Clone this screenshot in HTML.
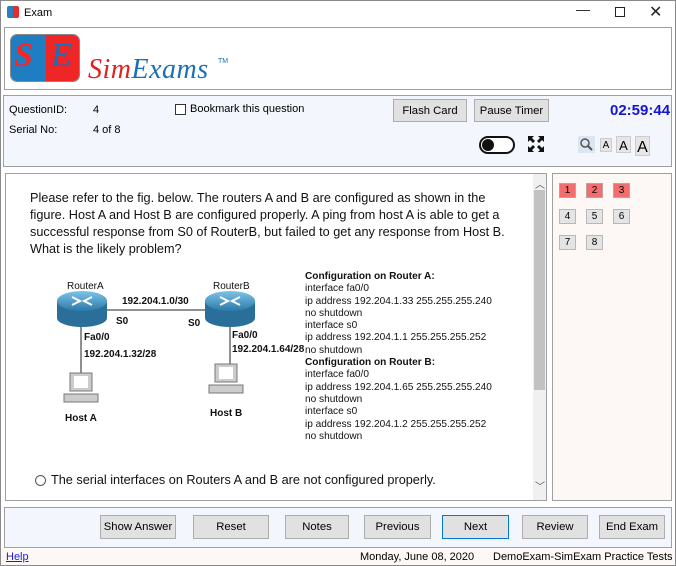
<!DOCTYPE html>
<html><head><meta charset="utf-8"><style>
*{margin:0;padding:0;box-sizing:border-box}
body{width:676px;height:566px;background:#fff;font-family:"Liberation Sans",Arial,sans-serif;position:relative;overflow:hidden;font-size:11px;color:#000}
.a{position:absolute}
.btn{position:absolute;background:#e1e1e1;border:1px solid #adadad;font-size:11.3px;text-align:center;line-height:22px;color:#000}
.cfg{position:absolute;left:305px;font-size:10.1px;line-height:12.3px;white-space:pre;color:#111}
.nb{position:absolute;width:17px;height:15px;background:#e4e4e4;border:1px solid #b8b8b8;font-size:10px;text-align:center;line-height:13px}
.nb.r{background:#f26d6d;border-color:#c0a0a0}
</style></head><body>
<div class="a" style="left:0;top:0;width:676px;height:566px;border:1px solid #8a8a8a"></div>
<div class="a" style="left:7px;top:6px;width:12px;height:12px;background:linear-gradient(90deg,#2a7fc0 50%,#e82b2b 50%);border-radius:2px"></div>
<div class="a" style="left:24px;top:7px;font-size:11px">Exam</div>
<div class="a" style="left:576px;top:1px;font-size:14px;color:#222">—</div>
<div class="a" style="left:615px;top:7px;width:10px;height:10px;border:1px solid #222"></div>
<div class="a" style="left:649px;top:2px;font-size:16px;color:#222">✕</div>
<div class="a" style="left:4px;top:27px;width:668px;height:63px;border:1px solid #a0a0a0;background:#fff"></div>
<div class="a" style="left:10px;top:34px;width:70px;height:48px;border-radius:7px;overflow:hidden;border:1px solid #888">
 <div class="a" style="left:0;top:0;width:35px;height:48px;background:#1f7dc2"></div>
 <div class="a" style="left:35px;top:0;width:35px;height:48px;background:#ee2626"></div>
 <div class="a" style="left:3px;top:2px;font:bold italic 34px 'Liberation Serif',serif;color:#f22">S</div>
 <div class="a" style="left:40px;top:2px;font:italic 34px 'Liberation Serif',serif;color:#1a6fb5">E</div>
</div>
<div class="a" style="left:88px;top:54px;font:italic 28px 'Liberation Serif',serif;color:#e32020;letter-spacing:0.5px">Sim<span style="color:#1a6fb5">Exams</span></div>
<div class="a" style="left:218px;top:58px;font-size:7px;color:#1a6fb5">TM</div>
<div class="a" style="left:3px;top:95px;width:669px;height:72px;border:1px solid #a0a0a0;background:#f4f6fd"></div>
<div class="a" style="left:9px;top:104px">QuestionID:</div>
<div class="a" style="left:93px;top:104px">4</div>
<div class="a" style="left:9px;top:124px">Serial No:</div>
<div class="a" style="left:93px;top:124px">4 of 8</div>
<div class="a" style="left:175px;top:104px;width:11px;height:11px;border:1px solid #333;background:#fff"></div>
<div class="a" style="left:190px;top:103px">Bookmark this question</div>
<div class="btn" style="left:393px;top:99px;width:74px;height:23px">Flash Card</div>
<div class="btn" style="left:474px;top:99px;width:75px;height:23px">Pause Timer</div>
<div class="a" style="left:610px;top:102px;font-size:15px;font-weight:bold;color:#1515d0">02:59:44</div>
<div class="a" style="left:479px;top:136px;width:36px;height:18px;border:2px solid #111;border-radius:9px;background:#fff"></div>
<div class="a" style="left:482px;top:139px;width:12px;height:12px;border-radius:6px;background:#111"></div>
<svg class="a" style="left:527px;top:135px" width="18" height="18" viewBox="0 0 18 18"><g fill="#111"><path d="M1 1h6l-2 2 3 3-2 2-3-3-2 2z"/><path d="M17 1v6l-2-2-3 3-2-2 3-3-2-2z"/><path d="M1 17v-6l2 2 3-3 2 2-3 3 2 2z"/><path d="M17 17h-6l2-2-3-3 2-2 3 3 2-2z"/></g></svg>
<div class="a" style="left:578px;top:136px;width:17px;height:17px;background:#dce6f0"></div>
<svg class="a" style="left:579px;top:137px" width="15" height="15"><circle cx="6" cy="6" r="4" fill="none" stroke="#555" stroke-width="1.5"/><line x1="9" y1="9" x2="13" y2="13" stroke="#555" stroke-width="2"/></svg>
<div class="a" style="left:600px;top:138px;width:12px;height:14px;background:#e6e6e6;border:1px solid #ccc;font-size:10px;text-align:center;line-height:13px">A</div>
<div class="a" style="left:616px;top:136px;width:15px;height:17px;background:#e6e6e6;border:1px solid #ccc;font-size:13px;text-align:center;line-height:17px">A</div>
<div class="a" style="left:635px;top:136px;width:15px;height:20px;background:#e6e6e6;border:1px solid #ccc;font-size:16px;text-align:center;line-height:21px">A</div>
<div class="a" style="left:5px;top:173px;width:542px;height:328px;border:1px solid #a0a0a0;background:#fff"></div>
<div class="a" style="left:533px;top:174px;width:13px;height:326px;background:#f0f0f0"></div>
<div class="a" style="left:534px;top:190px;width:11px;height:200px;background:#c2c2c2"></div>
<div class="a" style="left:535px;top:176px;font-size:10px;color:#555">︿</div>
<div class="a" style="left:535px;top:478px;font-size:10px;color:#555">﹀</div>
<div class="a" style="left:30px;top:190px;width:480px;font-size:12.7px;line-height:17px;color:#111">Please refer to the fig. below. The routers A and B are configured as shown in the figure. Host A and Host B are configured properly. A ping from host A is able to get a successful response from S0 of RouterB, but failed to get any response from Host B. What is the likely problem?</div>
<svg class="a" style="left:40px;top:270px" width="265" height="160" viewBox="0 0 265 160">
<defs><linearGradient id="g" x1="0" y1="0" x2="0" y2="1"><stop offset="0" stop-color="#7dc3e8"/><stop offset="1" stop-color="#2b7aa8"/></linearGradient></defs>
<line x1="45" y1="40" x2="185" y2="40" stroke="#222"/>
<line x1="41" y1="55" x2="41" y2="105" stroke="#222"/>
<line x1="190" y1="55" x2="190" y2="95" stroke="#222"/>
<g><rect x="17" y="31" width="50" height="17" fill="#2a6f99"/><ellipse cx="42" cy="48" rx="25" ry="9" fill="#2a6f99"/><ellipse cx="42" cy="31" rx="25" ry="10" fill="url(#g)"/><path d="M32 27l8 4-8 4M52 27l-8 4 8 4" stroke="#fff" stroke-width="2" fill="none"/></g>
<g transform="translate(148,0)"><rect x="17" y="31" width="50" height="17" fill="#2a6f99"/><ellipse cx="42" cy="48" rx="25" ry="9" fill="#2a6f99"/><ellipse cx="42" cy="31" rx="25" ry="10" fill="url(#g)"/><path d="M32 27l8 4-8 4M52 27l-8 4 8 4" stroke="#fff" stroke-width="2" fill="none"/></g>
<g font-family="Liberation Sans,Arial" font-size="10" fill="#111">
<text x="27" y="19">RouterA</text><text x="173" y="19">RouterB</text>
<text x="82" y="34" font-weight="bold">192.204.1.0/30</text>
<text x="76" y="54" font-weight="bold">S0</text><text x="148" y="56" font-weight="bold">S0</text>
<text x="44" y="70" font-weight="bold">Fa0/0</text><text x="44" y="87" font-weight="bold">192.204.1.32/28</text>
<text x="192" y="68" font-weight="bold">Fa0/0</text><text x="192" y="82" font-weight="bold">192.204.1.64/28</text>
<text x="25" y="151" font-weight="bold">Host A</text><text x="170" y="146" font-weight="bold">Host B</text>
</g>
<g fill="#ccc" stroke="#777"><rect x="30" y="103" width="22" height="18"/><rect x="24" y="124" width="34" height="8"/><rect x="175" y="94" width="22" height="18"/><rect x="169" y="115" width="34" height="8"/></g>
<rect x="34" y="106" width="14" height="12" fill="#fff"/><rect x="179" y="97" width="14" height="12" fill="#fff"/>
</svg>
<div class="cfg" style="top:271px"><b>Configuration on Router A:</b>
interface fa0/0
ip address 192.204.1.33 255.255.255.240
no shutdown
interface s0
ip address 192.204.1.1 255.255.255.252
no shutdown
<b>Configuration on Router B:</b>
interface fa0/0
ip address 192.204.1.65 255.255.255.240
no shutdown
interface s0
ip address 192.204.1.2 255.255.255.252
no shutdown</div>
<div class="a" style="left:35px;top:475px;width:11px;height:11px;border:1px solid #555;border-radius:6px"></div>
<div class="a" style="left:51px;top:473px;font-size:12.7px;color:#111">The serial interfaces on Routers A and B are not configured properly.</div>
<div class="a" style="left:552px;top:173px;width:120px;height:328px;border:1px solid #a0a0a0;background:#fdf8f6"></div>
<div class="nb r" style="left:559px;top:183px">1</div>
<div class="nb r" style="left:586px;top:183px">2</div>
<div class="nb r" style="left:613px;top:183px">3</div>
<div class="nb" style="left:559px;top:209px">4</div>
<div class="nb" style="left:586px;top:209px">5</div>
<div class="nb" style="left:613px;top:209px">6</div>
<div class="nb" style="left:559px;top:235px">7</div>
<div class="nb" style="left:586px;top:235px">8</div>
<div class="a" style="left:4px;top:507px;width:668px;height:41px;border:1px solid #a0a0a0;background:#f4f6fd"></div>
<div class="btn" style="left:100px;top:515px;width:76px;height:24px">Show Answer</div>
<div class="btn" style="left:193px;top:515px;width:76px;height:24px">Reset</div>
<div class="btn" style="left:285px;top:515px;width:64px;height:24px">Notes</div>
<div class="btn" style="left:364px;top:515px;width:67px;height:24px">Previous</div>
<div class="btn" style="left:442px;top:515px;width:67px;height:24px;border:1px solid #0078d7">Next</div>
<div class="btn" style="left:522px;top:515px;width:66px;height:24px">Review</div>
<div class="btn" style="left:599px;top:515px;width:66px;height:24px">End Exam</div>
<div class="a" style="left:1px;top:549px;width:674px;height:16px;background:#fdf8f6"></div>
<div class="a" style="left:6px;top:551px;font-size:11px;color:#1a1ae0;text-decoration:underline">Help</div>
<div class="a" style="left:360px;top:551px;font-size:11px">Monday, June 08, 2020</div>
<div class="a" style="left:493px;top:551px;font-size:11px">DemoExam-SimExam Practice Tests</div>
</body></html>
